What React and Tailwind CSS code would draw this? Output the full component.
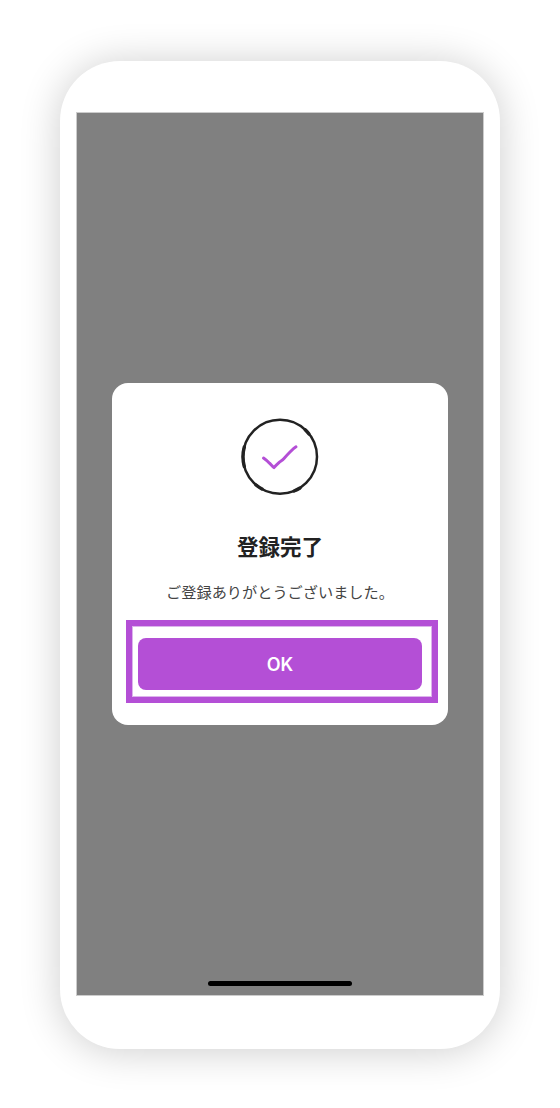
export default function App() {
  return (
    <div className="w-[560px] h-[1108px] bg-white pt-[61px] pl-[60px] font-['Noto_Sans_CJK_JP','Noto_Sans',sans-serif]">
      <div className="w-[440px] h-[988px] rounded-[60px] bg-white shadow-[0_2px_40px_rgba(0,0,0,0.2)] pt-[51px] px-[16px]">
        <div className="relative w-[408px] h-[884px] border border-[#cccccc] bg-[#808080] flex items-center justify-center">
          <div className="w-[336px] h-[342px] bg-white rounded-[16px] flex flex-col items-center pt-[34px]">
            <svg width="80" height="80" viewBox="0 0 80 80" fill="none" strokeLinecap="round" strokeLinejoin="round">
              <circle cx="40" cy="39.8" r="37" stroke="#222222" strokeWidth="2.5" />
              <path d="M4.300 30A37 37 0 0 0 4.300 49.600" stroke="#222222" strokeWidth="3.4" />
              <path d="M65.200 12.800A37 37 0 0 1 69 17" stroke="#222222" strokeWidth="3.4" />
              <path d="M22 72A37 37 0 0 1 16 68" stroke="#222222" strokeWidth="3.4" />
              <path d="M60 71A37 37 0 0 1 54 74" stroke="#222222" strokeWidth="3.4" />
              <path d="M23.500 41C25.500 42.400 27.500 44 29.500 46.200C31 47.600 32.500 49.400 34 50.600C35.600 48.800 37.400 47 39.200 45.400C41 44 42.600 43 44 41.400C46 39.200 48 37 50 35C52 33 53.500 31.400 56 29.800" stroke="#b44fd6" strokeWidth="3" />
            </svg>
            <h1 className="mt-[34px] text-[21.5px] leading-[30px] font-bold text-[#222222]">登録完了</h1>
            <p className="mt-[20px] text-[15.2px] leading-[20px] font-normal text-[#444444]">ご登録ありがとうございました。</p>
            <div className="ml-[4px] mt-[19px] w-[312px] h-[83px] border-[6px] border-[#b44fd6]">
              <div className="w-full h-full border border-[#dcb4ec] pl-[5px] pt-[11px]">
                <button className="block w-[284px] h-[52px] rounded-[8px] bg-[#b44fd6] text-white text-[18px] font-semibold font-['Inter',sans-serif]">OK</button>
              </div>
            </div>
          </div>
          <div className="absolute left-[131px] bottom-[9px] w-[144px] h-[5px] rounded-full bg-black" />
        </div>
      </div>
    </div>
  );
}
